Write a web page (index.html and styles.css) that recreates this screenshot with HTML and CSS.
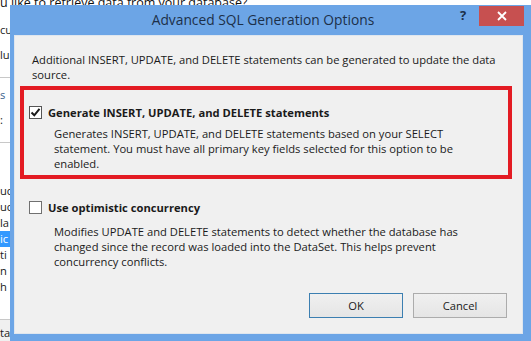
FILE: index.html
```html
<!DOCTYPE html>
<html lang="en">
<head>
    <meta charset="UTF-8">
    <title>Advanced SQL Generation Options</title>
    <link rel="stylesheet" href="styles.css">
</head>
<body>
    <div class="wizard">
        <div class="wizard-question">u like to retrieve data from your database?</div>
        <div class="wizard-row r1">cu</div>
        <div class="wizard-row r2">lu</div>
        <div class="wizard-rule"></div>
        <div class="wizard-row r3 link">s</div>
        <div class="wizard-row r4">:</div>
        <div class="wizard-rule"></div>
        <div class="wizard-list">
            <div class="item">uc</div>
            <div class="item">uc</div>
            <div class="item">la</div>
            <div class="item selected">ic</div>
            <div class="item">ti</div>
            <div class="item">n</div>
            <div class="item">h</div>
        </div>
        <div class="wizard-footer">ta</div>
    </div>

    <div class="dialog">
        <div class="titlebar">
            <div class="title">Advanced SQL Generation Options</div>
            <div class="help">?</div>
            <div class="close">
                <svg width="10" height="10" viewBox="0 0 10 10">
                    <path d="M1 1 L9 9 M9 1 L1 9" stroke="#fff" stroke-width="1.8"/>
                </svg>
            </div>
        </div>

        <div class="content">
            <p class="intro">Additional INSERT, UPDATE, and DELETE statements can be generated to update the data<br>source.</p>

            <div class="highlight">
                <div class="option">
                    <label class="check-row">
                        <span class="checkbox checked">
                            <svg width="11" height="11" viewBox="0 0 11 11">
                                <path d="M1.5 5.5 L4.3 8.3 L9.5 1.8" fill="none" stroke="#1a1a1a" stroke-width="2"/>
                            </svg>
                        </span>
                        <span class="check-label">Generate INSERT, UPDATE, and DELETE statements</span>
                    </label>
                    <p class="desc">Generates INSERT, UPDATE, and DELETE statements based on your SELECT<br>statement. You must have all primary key fields selected for this option to be<br>enabled.</p>
                </div>
            </div>

            <div class="option second">
                <label class="check-row">
                    <span class="checkbox"></span>
                    <span class="check-label">Use optimistic concurrency</span>
                </label>
                <p class="desc">Modifies UPDATE and DELETE statements to detect whether the database has<br>changed since the record was loaded into the DataSet. This helps prevent<br>concurrency conflicts.</p>
            </div>

            <div class="buttons">
                <button class="btn default">OK</button>
                <button class="btn">Cancel</button>
            </div>
        </div>
    </div>
</body>
</html>
```

FILE: styles.css
```css
* {
    margin: 0;
    padding: 0;
    box-sizing: border-box;
}

body {
    width: 531px;
    height: 341px;
    overflow: hidden;
    position: relative;
    background: #ffffff;
    font-family: 'Open Sans', 'Noto Sans', Arial, sans-serif;
    font-size: 11.2px;
    color: #1a1a1a;
}

/* wizard window behind the dialog */
.wizard {
    height: 341px;
    overflow: hidden;
}

.wizard-question {
    font-size: 12.5px;
    line-height: 16px;
    margin-top: -5px;
    white-space: nowrap;
    color: #111;
}

.wizard-row {
    height: 25px;
    line-height: 25px;
    white-space: nowrap;
    color: #222;
}

.r1 { margin-top: 6px; }

.wizard-row.r3 {
    margin-top: 4px;
}

.wizard-row.link {
    color: #3a5f8c;
}

.wizard-rule {
    height: 1px;
    background: #c8c8c8;
    margin-top: 10px;
    width: 20px;
}

.wizard-list {
    margin-top: 40px;
}

.wizard-list .item {
    height: 16px;
    line-height: 16px;
    white-space: nowrap;
}

.wizard-list .item.selected {
    background: #3399ff;
    color: #fff;
}

.wizard-footer {
    margin-top: 24px;
    border-top: 1px solid #c8c8c8;
    background: #f0f0f0;
    height: 40px;
    padding-top: 5px;
}

/* dialog window */
.dialog {
    position: absolute;
    left: 10px;
    top: 5px;
    width: 523px;
    height: 336px;
    background: #6ca5e6;
    padding: 0 10px 7px 4px;
    display: flex;
    flex-direction: column;
}

.titlebar {
    height: 30px;
    display: flex;
    align-items: flex-start;
}

.title {
    flex: 1;
    text-align: center;
    font-size: 13.8px;
    line-height: 30px;
    color: #1c3049;
    padding-left: 52px;
    white-space: nowrap;
}

.help {
    font-weight: bold;
    font-size: 13px;
    color: #1c3049;
    line-height: 18px;
    margin-top: 1px;
    width: 19px;
}

.close {
    width: 45px;
    height: 20px;
    margin-top: 1px;
    margin-right: -1px;
    background: #c75050;
    display: flex;
    align-items: center;
    justify-content: center;
}

.content {
    flex: 1;
    background: #f0f0f0;
    border: 1px solid #dfe6ee;
    padding: 16px 10px 0 5px;
    display: flex;
    flex-direction: column;
}

.intro {
    margin-left: 12px;
    line-height: 15px;
    white-space: nowrap;
}

.highlight {
    margin-top: 4px;
    border: 4px solid #e31b23;
    padding: 15px 0 4px 5px;
}

.check-row {
    display: flex;
    align-items: center;
    gap: 6px;
    height: 14px;
}

.checkbox {
    width: 13px;
    height: 13px;
    border: 1px solid #555;
    background: #fff;
    display: flex;
    align-items: center;
    justify-content: center;
}

.checkbox:not(.checked) {
    border-color: #707070;
}

.check-label {
    font-weight: bold;
    white-space: nowrap;
}

.desc {
    margin-top: 7px;
    margin-left: 25px;
    line-height: 15px;
    white-space: nowrap;
}

.option.second {
    margin-top: 21px;
    padding-left: 9px;
}

.option.second .desc {
    margin-top: 10px;
}

.buttons {
    margin-top: auto;
    margin-bottom: 15px;
    display: flex;
    justify-content: flex-end;
    gap: 10px;
    padding-right: 5px;
}

.btn {
    width: 94px;
    height: 25px;
    font-family: inherit;
    font-size: 11.2px;
    color: #1a1a1a;
    background: linear-gradient(#f0f0f0, #e5e5e5);
    border: 1px solid #acacac;
}

.btn.default {
    border-color: #3c7fb1;
}
```
